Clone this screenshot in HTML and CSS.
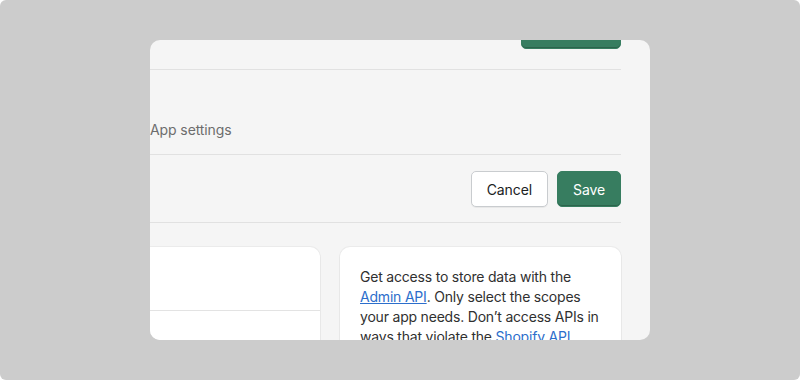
FILE: index.html
```html
<!DOCTYPE html>
<html lang="en">
<head>
    <meta charset="UTF-8">
    <meta name="viewport" content="width=device-width, initial-scale=1.0">
    <title>App settings</title>
    <link rel="stylesheet" href="styles.css">
</head>
<body>

    <!-- Modal preview -->
    <div class="modal">
        <div class="page">

            <!-- Top bar (scrolled) -->
            <div class="top-bar">
                <button class="btn btn-primary btn-wide">Install</button>
            </div>

            <!-- Title -->
            <div class="title-bar">
                <span class="crumb">App settings</span>
            </div>

            <!-- Actions -->
            <div class="action-bar">
                <button class="btn">Cancel</button>
                <button class="btn btn-primary">Save</button>
            </div>

            <!-- Content -->
            <div class="layout">
                <div class="card card-main">
                    <div class="card-section"></div>
                    <div class="card-section"></div>
                </div>
                <div class="card card-side">
                    <p>Get access to store data with the <a href="#">Admin API</a>. Only select the scopes your app needs. Don’t access APIs in ways that violate the <a href="#">Shopify API License and Terms of Use</a>.</p>
                </div>
            </div>

        </div>
    </div>

</body>
</html>
```
FILE: styles.css
```css
/* Global */
html {
    background: #fff;
}

body {
    margin: 0;
    height: 380px;
    background-color: #cccccc;
    border-radius: 6px;
    font-family: 'Inter', 'Noto Sans', sans-serif;
    font-size: 14px;
    line-height: 20px;
    color: #303030;
    display: flex;
    justify-content: center;
    align-items: center;
}

/* Modal */
.modal {
    width: 500px;
    height: 300px;
    background: #f5f5f5;
    border-radius: 10px;
    overflow: hidden;
}

.page {
    margin: -27px 29px 0 -301px;
}

/* Buttons */
.btn {
    font-family: inherit;
    font-size: 14px;
    font-weight: 400;
    letter-spacing: -0.1px;
    white-space: nowrap;
    height: 36px;
    padding: 0 15px;
    background: #fff;
    color: #202223;
    border: 1px solid #c9cccf;
    border-radius: 5px;
    box-shadow: 0 1px 0 rgba(0, 0, 0, 0.05);
}

.btn-primary {
    background: #377d60;
    border-color: #377d60;
    color: #fff;
    box-shadow: inset 0 -1px 0 rgba(0, 0, 0, 0.2);
}

.btn-wide {
    width: 100px;
}

/* Bars */
.top-bar {
    display: flex;
    justify-content: flex-end;
    padding-bottom: 20px;
    border-bottom: 1px solid #e1e1e1;
}

.title-bar {
    padding: 50px 0 14px 301px;
    border-bottom: 1px solid #e1e1e1;
}

.crumb {
    font-size: 14px;
    letter-spacing: -0.1px;
    color: #6d6d6d;
}

.action-bar {
    display: flex;
    justify-content: flex-end;
    gap: 9px;
    padding: 16px 0 15px;
    border-bottom: 1px solid #e1e1e1;
}

/* Layout */
.layout {
    display: flex;
    gap: 20px;
    padding-top: 24px;
}

.card {
    background: #fff;
    border-radius: 10px;
    box-shadow: 0 0 0 1px rgba(0, 0, 0, 0.04), 0 1px 2px rgba(0, 0, 0, 0.06);
}

.card-main {
    flex: 1;
}

.card-section {
    height: 63px;
    border-bottom: 1px solid #e3e3e3;
}

.card-side {
    width: 281px;
    padding: 20px;
    box-sizing: border-box;
    letter-spacing: -0.2px;
}

.card-side p {
    margin: 0;
}

.card-side a {
    color: #2c6ecb;
}
```
